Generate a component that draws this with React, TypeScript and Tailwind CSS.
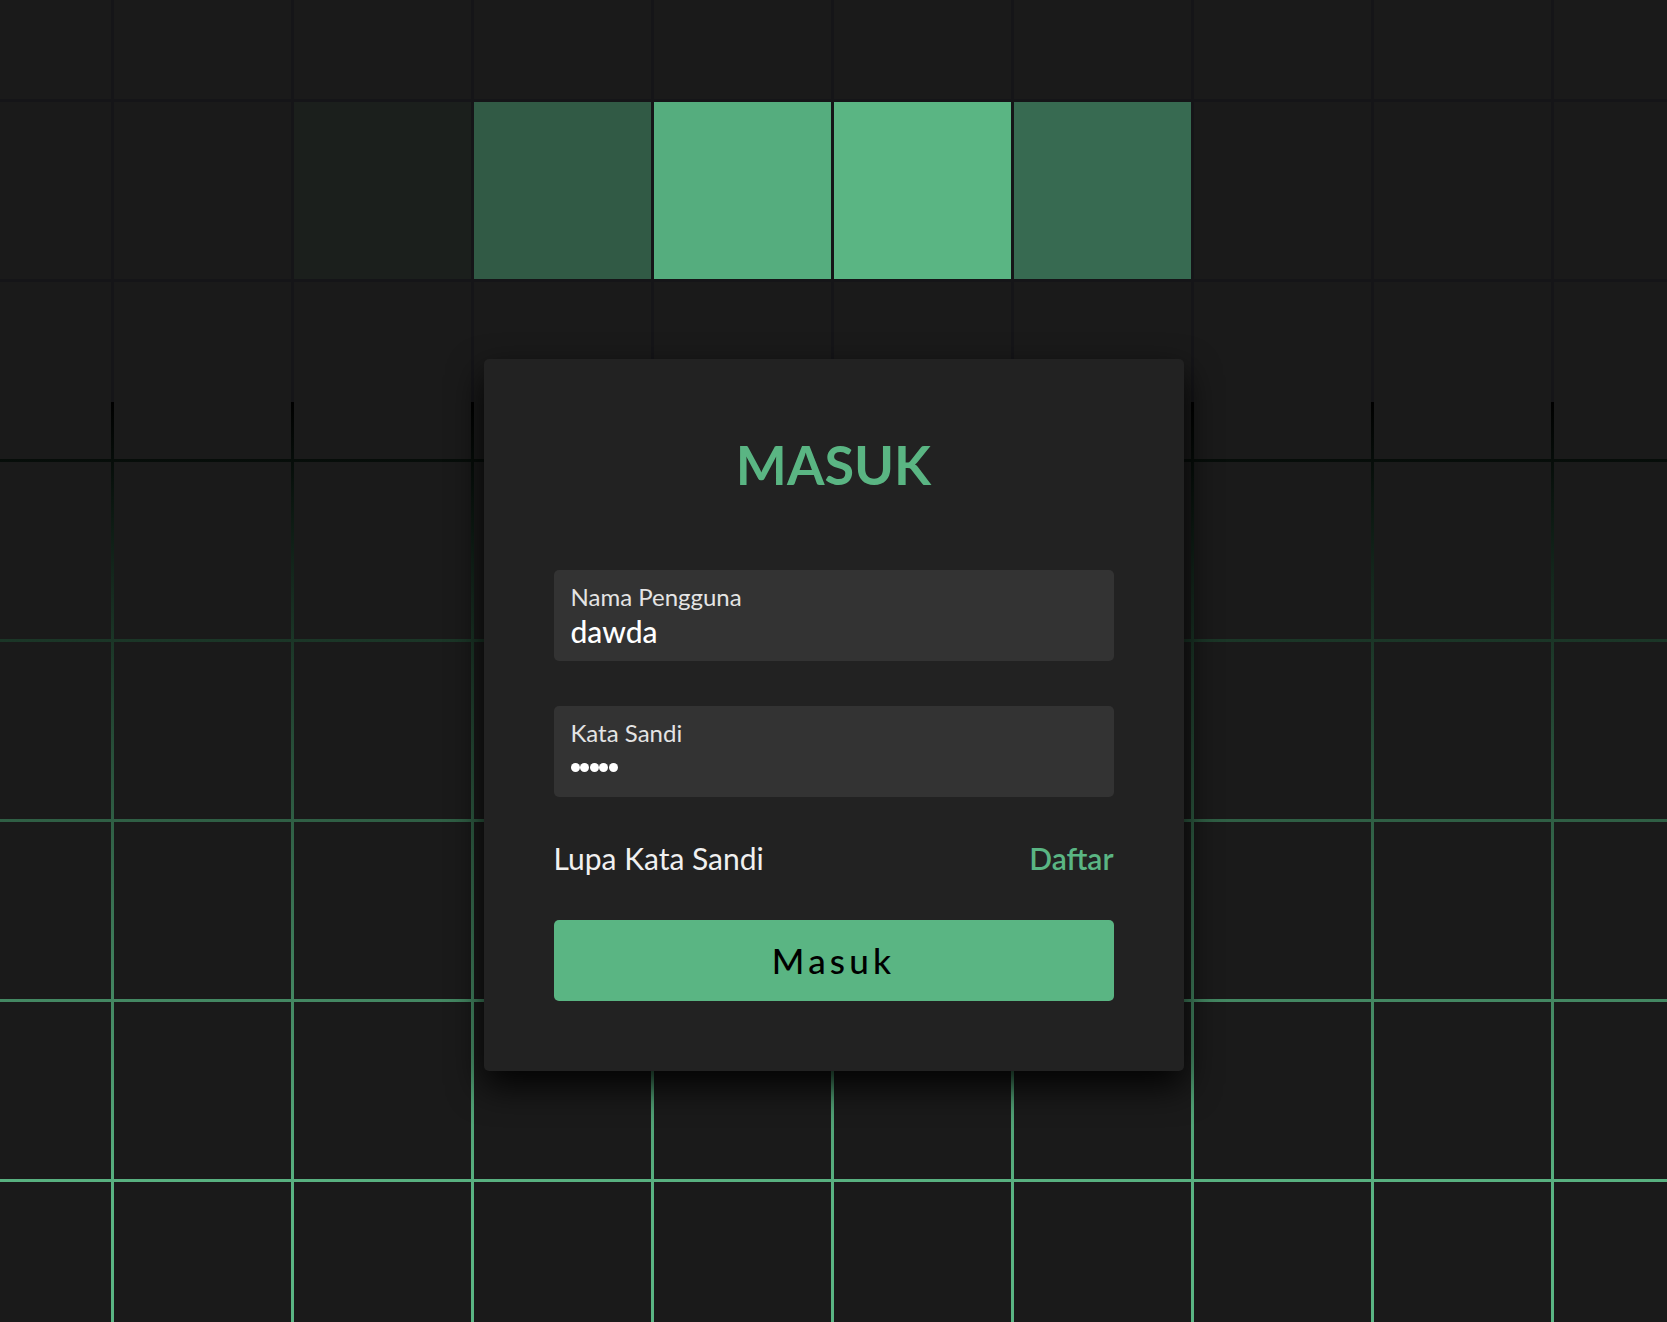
const COLS = 10;
const ROWS = 9;

// cells lit by the hover trail (row, col) -> colour
const lit: Record<string, string> = {
    '1-2': 'bg-[#1b1f1c]',
    '1-3': 'bg-[#315a45]',
    '1-4': 'bg-[#55ad7e]',
    '1-5': 'bg-[#5ab583]',
    '1-6': 'bg-[#376a51]',
};

const Field = ({ label, children }: { label: string; children: React.ReactNode }) => (
    <div className="flex h-[91px] flex-col gap-[7px] rounded-[5px] bg-[#333333] px-[17px] pt-[15px]">
        <span className="text-[24px] leading-none text-[#e4e4e4]">{label}</span>
        {children}
    </div>
);

export default function App() {
    const cells = [];
    for (let r = 0; r < ROWS; r++) {
        for (let c = 0; c < COLS; c++) {
            cells.push(<span key={`${r}-${c}`} className={`block ${lit[`${r}-${c}`] ?? 'bg-[#1a1a1a]'}`} />);
        }
    }

    return (
        <div
            className="relative h-[1322px] overflow-hidden bg-[linear-gradient(to_bottom,#151518_0px,#151518_402px,#000000_402px,#5ab583_1200px)]"
            style={{ fontFamily: 'Lato, "Noto Sans", sans-serif' }}
        >
            <div className="absolute left-[-66px] top-[-78px] grid grid-cols-[repeat(10,177px)] grid-rows-[repeat(9,177px)] gap-[3px]">
                {cells}
            </div>

            <div className="relative z-10 pt-[359px]">
                <div className="mx-auto flex w-[700px] flex-col rounded-[5px] bg-[#222222] px-[70px] pb-[70px] pt-[79px] shadow-[0_15px_35px_rgba(0,0,0,0.9)]">
                    <h2 className="text-center text-[54px] font-bold leading-none text-[#5ab583]">MASUK</h2>

                    <div className="mt-[78px] flex flex-col gap-[45px]">
                        <Field label="Nama Pengguna">
                            <span className="text-[30px] font-medium leading-none text-white">dawda</span>
                        </Field>
                        <Field label="Kata Sandi">
                            <div className="flex h-[30px] items-center gap-[0.5px]">
                                <span className="h-[9px] w-[9px] rounded-full bg-white" />
                                <span className="h-[9px] w-[9px] rounded-full bg-white" />
                                <span className="h-[9px] w-[9px] rounded-full bg-white" />
                                <span className="h-[9px] w-[9px] rounded-full bg-white" />
                                <span className="h-[9px] w-[9px] rounded-full bg-white" />
                            </div>
                        </Field>
                    </div>

                    <div className="mt-[46px] flex items-center justify-between text-[30px] leading-none">
                        <a className="text-[#f0f0f0]" href="#">Lupa Kata Sandi</a>
                        <a className="font-semibold text-[#5ab583]" href="#">Daftar</a>
                    </div>

                    <button className="mt-[47px] h-[81px] rounded-[5px] bg-[#5ab583] text-[35px] font-medium tracking-[0.12em] text-black">
                        Masuk
                    </button>
                </div>
            </div>
        </div>
    );
}
